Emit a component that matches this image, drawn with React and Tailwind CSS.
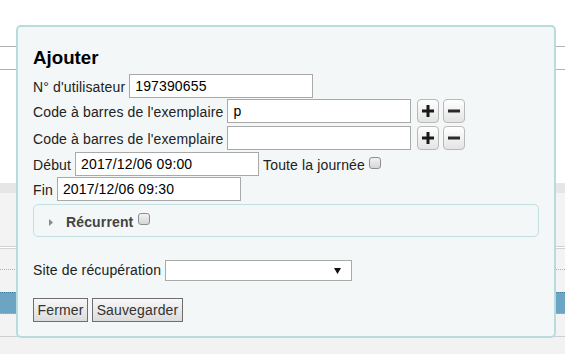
import React from 'react';

// Small +/- button next to the barcode inputs
function IconButton({ kind, className = '' }) {
  return (
    <button
      type="button"
      className={`flex h-[24px] w-[22px] shrink-0 items-center justify-center rounded-[4px] border border-[#b9b9b9] bg-gradient-to-b from-[#ffffff] to-[#e4e4e4] ${className}`}
    >
      <svg width="12" height="12" viewBox="0 0 12 12">
        {kind === 'plus' ? (
          <path d="M4.5 0h3v4.5H12v3H7.5V12h-3V7.5H0v-3h4.5z" fill="#1a1a1a" />
        ) : (
          <rect x="0" y="4.5" width="12" height="3" fill="#2a2a2a" />
        )}
      </svg>
    </button>
  );
}

function Checkbox({ className = '' }) {
  return (
    <span
      className={`inline-block h-[12px] w-[12px] shrink-0 rounded-[3px] border border-[#8e8e8e] bg-gradient-to-b from-[#f2f2f2] to-[#d6d6d6] ${className}`}
    />
  );
}

function TextInput({ value = '' }) {
  return (
    <div className="h-[24px] w-[184px] shrink-0 border border-[#a9a9a9] bg-white pl-[5px] text-[14px] leading-[23px] text-black">
      {value}
    </div>
  );
}

function Label({ children }) {
  return <span className="h-[24px] shrink-0 text-[14px] leading-[26px] text-[#222]">{children}</span>;
}

export default function App() {
  return (
    <div className="relative h-[354px] w-[565px] overflow-hidden bg-white font-['Liberation_Sans',Arial,sans-serif]">
      {/* page behind the dialog */}
      <div className="h-[46px] bg-white" />
      <div className="h-px bg-[#b3b3b3]" />
      <div className="h-[22px] bg-white" />
      <div className="h-px bg-[#b3b3b3]" />
      <div className="h-[113px] bg-white" />
      <div className="h-[10px] bg-[#e6e6e6]" />
      <div className="h-[53px] bg-[#f3f3f3]" />
      <div className="h-[3px] border-t border-b border-[#d2d2d2] bg-white" />
      <div className="h-[21px] border-b border-dotted border-[#b0b0b0] bg-[#f3f3f3]" />
      <div className="h-[22px] bg-[#f3f3f3]" />
      <div className="h-[22px] border-t border-b border-dotted border-t-solid border-t-[#3d7fa6] border-b-[#b0b0b0] bg-[#6ca5c4]" />
      <div className="h-[22px] bg-[#f3f3f3]" />
      <div className="h-px bg-[#cfcfcf]" />
      <div className="h-[30px] bg-[#f2f2f2]" />

      {/* dialog */}
      <div className="absolute left-[16px] top-[25px] h-[313px] w-[540px] rounded-[5px] border-2 border-[#b8dcdd] bg-[#f3f7f7] px-[15px] pt-[20px] text-[14px] tracking-[0.14px] text-[#222]">
        <h3 className="h-[22px] text-[18.72px] font-bold leading-[22px] tracking-normal text-black">Ajouter</h3>

        <div className="mt-[5px] flex h-[25px] items-start gap-[4px]">
          <Label>N° d'utilisateur</Label>
          <TextInput value="197390655" />
        </div>

        <div className="flex h-[27px] items-start gap-[4px]">
          <Label>Code à barres de l'exemplaire</Label>
          <TextInput value="p" />
          <div className="ml-[2px] flex">
            <IconButton kind="plus" />
            <IconButton kind="minus" className="ml-[4px]" />
          </div>
        </div>

        <div className="flex h-[26px] items-start gap-[4px]">
          <Label>Code à barres de l'exemplaire</Label>
          <TextInput />
          <div className="ml-[2px] flex">
            <IconButton kind="plus" />
            <IconButton kind="minus" className="ml-[4px]" />
          </div>
        </div>

        <div className="flex h-[25px] items-start gap-[4px]">
          <Label>Début</Label>
          <TextInput value="2017/12/06 09:00" />
          <Label>Toute la journée</Label>
          <Checkbox className="mt-[5px]" />
        </div>

        <div className="flex h-[25px] items-start gap-[4px]">
          <Label>Fin</Label>
          <TextInput value="2017/12/06 09:30" />
        </div>

        {/* récurrent accordion header */}
        <div className="mt-[2px] flex h-[33px] items-center rounded-[5px] border border-[#c2e0e1] pl-[15px]">
          <svg width="4" height="7" viewBox="0 0 4 7" className="mt-[4px]">
            <path d="M0 0L4 3.5L0 7Z" fill="#8a8a8a" />
          </svg>
          <span className="ml-[13px] mt-[3px] text-[14px] font-bold leading-[20px] text-[#444]">Récurrent</span>
          <Checkbox className="ml-[5px] -mt-[3px]" />
        </div>

        <div className="mt-[23px] flex h-[21px] items-start gap-[4px]">
          <span className="text-[14px] leading-[21px] text-[#222]">Site de récupération</span>
          <div className="relative h-[21px] w-[187px] border border-[#a9a9a9] bg-white">
            <svg width="7" height="6" viewBox="0 0 7 6" className="absolute right-[10px] top-[7px]">
              <path d="M0 0H7L3.5 6Z" fill="#111" />
            </svg>
          </div>
        </div>

        <div className="mt-[17px] flex gap-[4px]">
          <button
            type="button"
            className="h-[24px] w-[55px] border border-[#6e6e6e] bg-gradient-to-b from-[#f7f7f7] to-[#dcdcdc] text-[14px] leading-[22px] text-[#333]"
          >
            Fermer
          </button>
          <button
            type="button"
            className="h-[24px] w-[91px] border border-[#6e6e6e] bg-gradient-to-b from-[#f7f7f7] to-[#dcdcdc] text-[14px] leading-[22px] text-[#333]"
          >
            Sauvegarder
          </button>
        </div>
      </div>
    </div>
  );
}
